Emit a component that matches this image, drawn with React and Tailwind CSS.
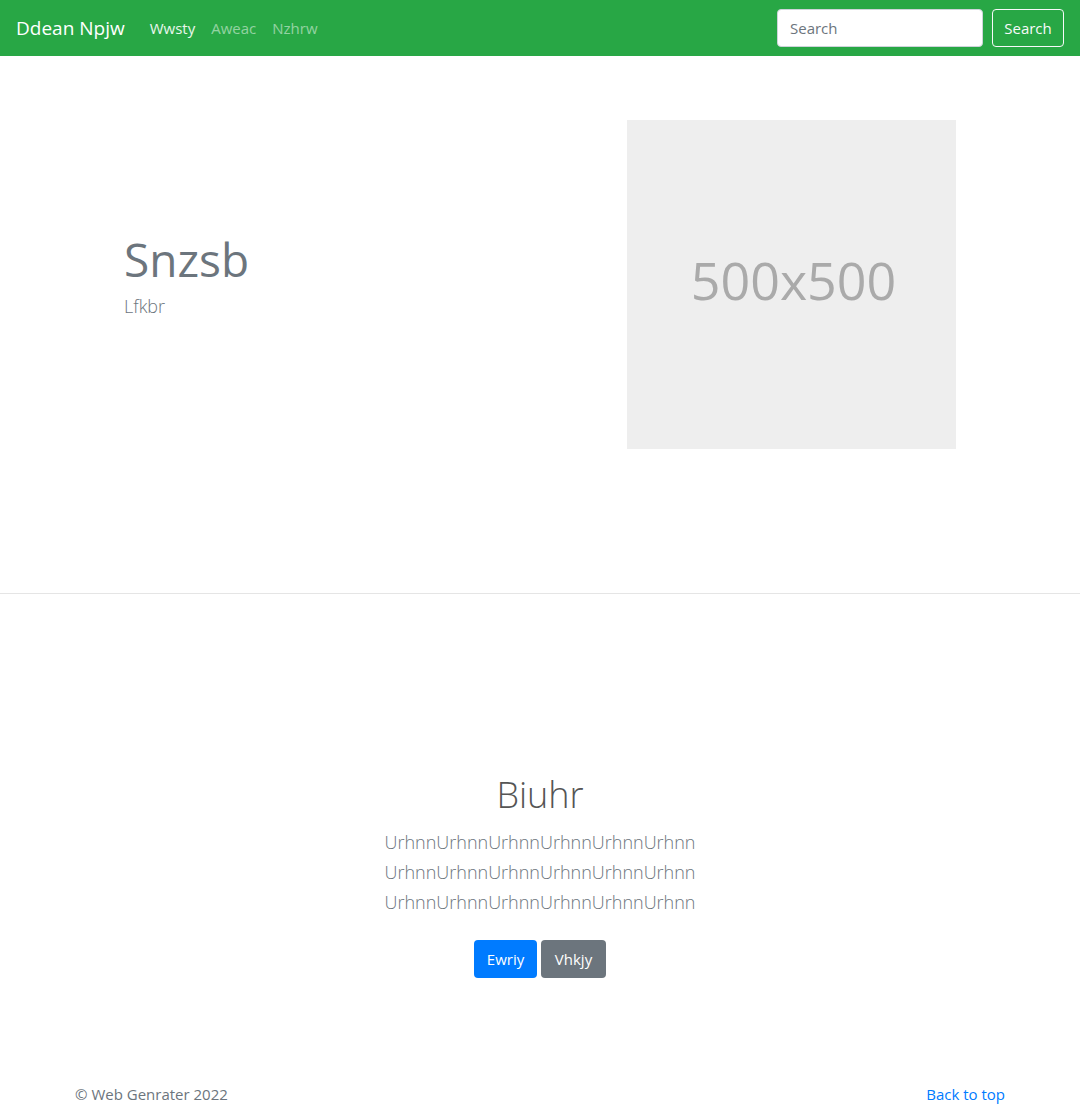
import { useState } from 'react'

const font = { fontFamily: '"Open Sans", "Noto Sans", sans-serif' }

function Navbar() {
  const [q, setQ] = useState('')
  return (
    <nav className="h-14 bg-[#28a745] px-4 flex items-center justify-between">
      <div className="flex items-center">
        <a href="#" className="text-white text-[19px] mr-[17px] leading-[30px]">Ddean Npjw</a>
        <ul className="flex items-center">
          <li><a href="#" className="block px-2 py-2 text-white/90 text-[15px]">Wwsty</a></li>
          <li><a href="#" className="block px-2 py-2 text-white/50 text-[15px]">Aweac</a></li>
          <li><a href="#" className="block px-2 py-2 text-white/50 text-[15px]">Nzhrw</a></li>
        </ul>
      </div>
      <form className="flex items-center" onSubmit={e => e.preventDefault()}>
        <input value={q} onChange={e => setQ(e.target.value)} placeholder="Search" className="w-[206px] h-[38px] bg-white border border-[#ced4da] rounded px-3 text-[15px] text-[#495057] placeholder:text-[#6c757d] outline-none mr-[9px]" />
        <button className="h-[38px] w-[72px] border border-[#f8f9fa] rounded text-[#f8f9fa] text-[15px]">Search</button>
      </form>
    </nav>
  )
}

function Hero() {
  return (
    <section className="border-b border-[#e5e5e5]">
      <div className="ml-[124px] mr-[124px] pt-16 pb-[144px] flex items-center justify-between">
        <div className="pb-[18px]">
          <h1 className="text-[46px] leading-[56px] text-[#6c757d] mb-[6px]">Snzsb</h1>
          <p className="text-[18px] font-light leading-[27px] text-[#6c757d]">Lfkbr</p>
        </div>
        <div className="w-[329px] h-[329px] bg-[#eeeeee] flex items-center justify-center">
          <span className="text-[52px] text-[#aaaaaa] leading-none pb-[10px] pl-1">500x500</span>
        </div>
      </div>
    </section>
  )
}

function Album() {
  return (
    <section className="text-center pt-[177px] pb-[56px]">
      <h1 className="text-[36px] font-light leading-[48px] text-[#555555] mb-2">Biuhr</h1>
      <p className="text-[18px] font-light leading-[30px] text-[#6c757d] mb-[23px]">
        UrhnnUrhnnUrhnnUrhnnUrhnnUrhnn<br />
        UrhnnUrhnnUrhnnUrhnnUrhnnUrhnn<br />
        UrhnnUrhnnUrhnnUrhnnUrhnnUrhnn
      </p>
      <div className="flex justify-center gap-1">
        <a href="#" className="h-[38px] w-[63px] justify-center flex items-center bg-[#007bff] text-white rounded text-[15px]">Ewriy</a>
        <a href="#" className="h-[38px] w-[65px] justify-center flex items-center bg-[#6c757d] text-white rounded text-[15px]">Vhkjy</a>
      </div>
    </section>
  )
}

export default function App() {
  return (
    <div className="min-h-screen bg-white" style={font}>
      <Navbar />
      <Hero />
      <Album />
      <footer className="pt-12 pb-12">
        <div className="mx-[75px] flex justify-between text-[15px] leading-6">
          <p className="text-[#6c757d]">© Web Genrater 2022</p>
          <a href="#" className="text-[#007bff]">Back to top</a>
        </div>
      </footer>
    </div>
  )
}
